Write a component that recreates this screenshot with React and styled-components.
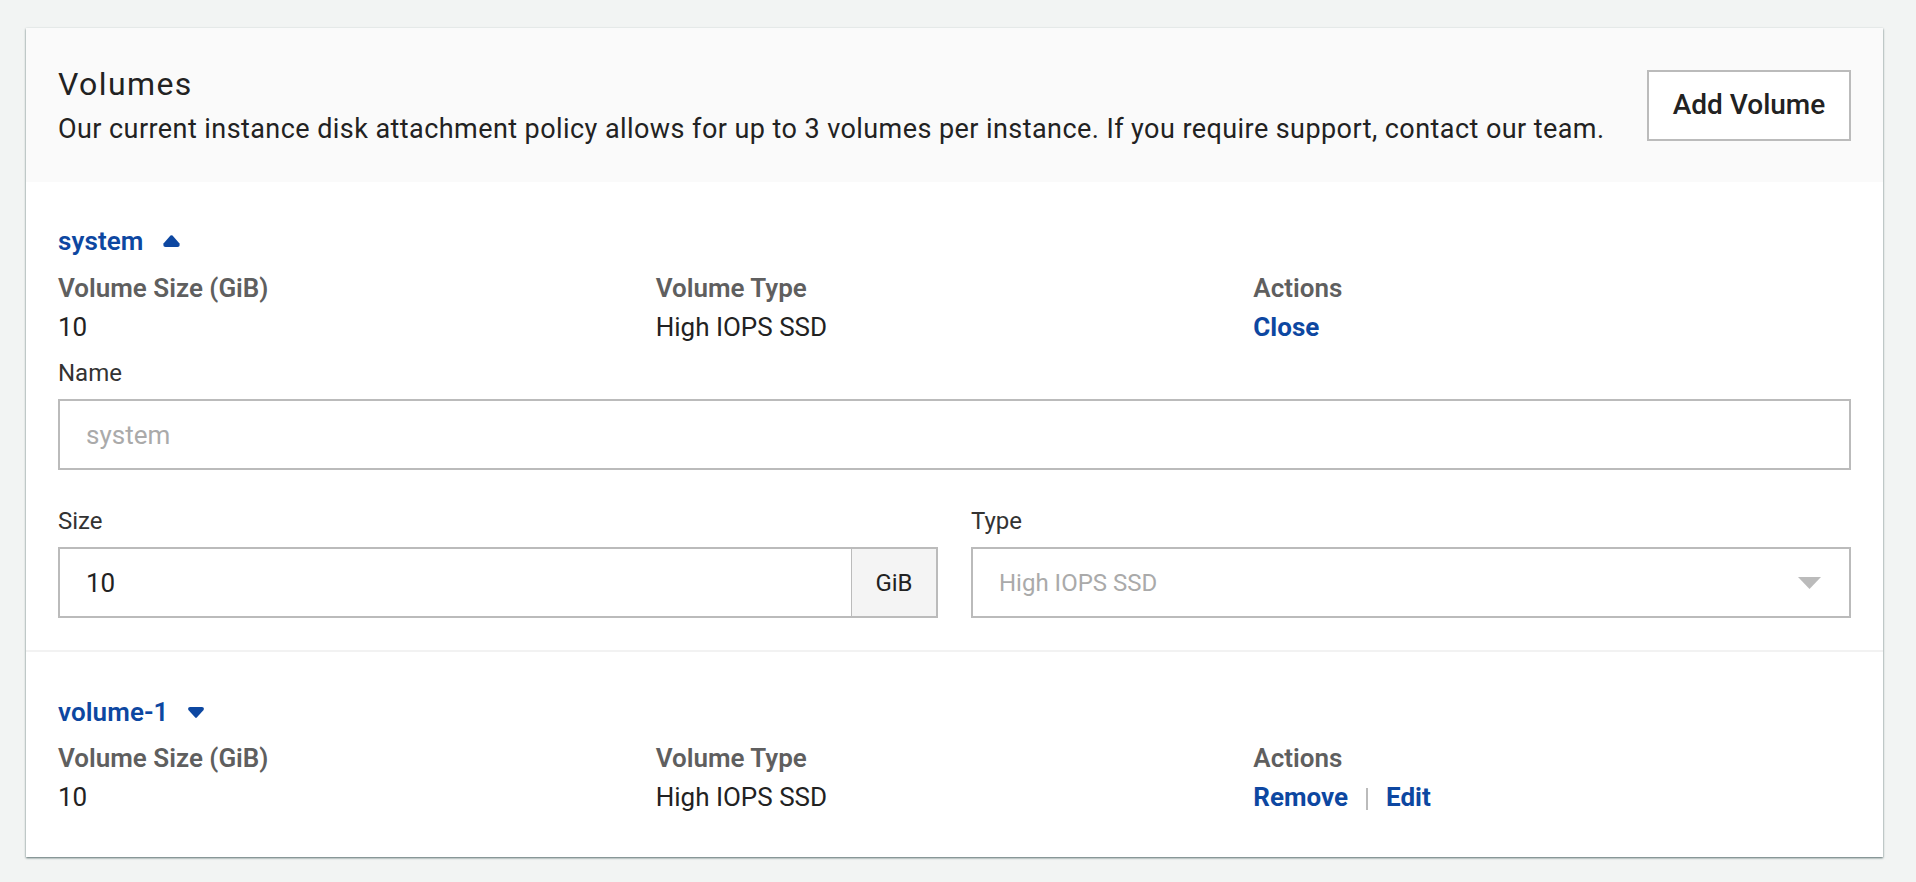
import React from "react";
import styled, { createGlobalStyle } from "styled-components";

const GlobalStyle = createGlobalStyle`
  html, body {
    margin: 0;
    padding: 0;
    background: #f2f4f3;
    font-family: Roboto, "Noto Sans", sans-serif;
    color: #222;
  }
`;

const Page = styled.div`
  box-sizing: border-box;
  height: 882px;
  padding: 28px 33px 0 26px;
  overflow: hidden;
`;

const Card = styled.section`
  background: #fff;
  height: 829px;
  box-shadow: 0 1px 2px rgba(60, 85, 85, 0.85);
`;

const CardHeader = styled.header`
  box-sizing: border-box;
  height: 154px;
  background: #fafafa;
  padding: 41px 32px 0;
  display: flex;
  justify-content: space-between;
  align-items: flex-start;
`;

const Title = styled.h2`
  margin: 0;
  font-size: 32px;
  line-height: 30px;
  font-weight: 450;
  letter-spacing: 1.4px;
  color: #222;
`;

const Description = styled.p`
  margin: 15px 0 0;
  font-size: 27px;
  line-height: 30px;
  letter-spacing: 0.43px;
  white-space: nowrap;
  color: #222;
`;

const AddButton = styled.button`
  box-sizing: border-box;
  width: 204px;
  height: 71px;
  margin-top: 1px;
  padding: 0 0 2px;
  background: #fff;
  border: 2px solid #bbb;
  font: 500 28px Roboto, sans-serif;
  color: #222;
`;

const Volume = styled.div`
  padding: ${(props) => props.$padding};
  border-bottom: ${(props) => (props.$divided ? "2px solid #f2f2f2" : "none")};
`;

const VolumeToggle = styled.div`
  display: flex;
  align-items: center;
  gap: 19px;
  height: 30px;
  font-size: 26px;
  font-weight: 600;
  letter-spacing: 0.1px;
  color: #0d47a1;
`;

const Caret = styled.svg`
  width: ${(props) => (props.$up ? "17px" : "16px")};
  height: ${(props) => (props.$up ? "12px" : "11px")};
  fill: #0d47a1;
`;

const Summary = styled.div`
  display: grid;
  grid-template-columns: repeat(3, 1fr);
  margin-top: ${(props) => props.$top};
`;

const SummaryHead = styled.div`
  font-size: 26px;
  font-weight: 600;
  line-height: 30px;
  color: #5f5f5f;
`;

const SummaryCell = styled.div`
  margin-top: 9px;
  font-size: 26px;
  line-height: 30px;
  color: #222;
`;

const ActionLink = styled.a`
  font-weight: 700;
  color: #0d47a1;
`;

const ActionSep = styled.span`
  display: inline-block;
  width: 2px;
  height: 22px;
  margin: 0 18px;
  background: #bbb;
  vertical-align: -4px;
`;

const Label = styled.label`
  display: block;
  font-size: 24px;
  line-height: 26px;
  color: #333;
  margin-bottom: 13px;
`;

const Input = styled.div`
  box-sizing: border-box;
  flex: 1;
  height: 71px;
  display: flex;
  align-items: center;
  padding: 0 26px;
  border: 2px solid #bbb;
  background: #fff;
  font-size: ${(props) => props.$size || "26px"};
  color: ${(props) => (props.$muted ? "#aaa" : "#222")};
`;

const NameField = styled.div`
  margin-top: 18px;
`;

const FieldRow = styled.div`
  display: grid;
  grid-template-columns: 880px 880px;
  column-gap: 33px;
  margin-top: 38px;
`;

const InputGroup = styled.div`
  display: flex;
`;

const GroupedInput = styled(Input)`
  border-right: 0;
`;

const Addon = styled.div`
  box-sizing: border-box;
  width: 87px;
  height: 71px;
  display: flex;
  align-items: center;
  justify-content: center;
  background: #f4f4f4;
  border: 2px solid #bbb;
  border-left-width: 1px;
  font-size: 24px;
  color: #222;
`;

const SelectBox = styled(Input)`
  justify-content: space-between;
  padding-right: 28px;
`;

const SelectCaret = styled.svg`
  width: 23px;
  height: 12px;
  fill: #bbb;
`;

function CaretIcon({ up }) {
  return (
    <Caret $up={up} viewBox={up ? "0 0 17 12" : "0 0 16 11"}>
      <path
        d={
          up
            ? "M7.5.5Q8.5-.2 9.5.5L16.3 8.2Q17.6 12 14.5 12H2.5Q-.6 12 .7 8.2Z"
            : "M.4 3Q-.6 0 2 0H14Q16.6 0 15.6 3L8.8 10.6Q8 11.2 7.2 10.6Z"
        }
      />
    </Caret>
  );
}

function VolumeSummary({ actions, top }) {
  return (
    <Summary $top={top}>
      <div>
        <SummaryHead>Volume Size (GiB)</SummaryHead>
        <SummaryCell>10</SummaryCell>
      </div>
      <div>
        <SummaryHead>Volume Type</SummaryHead>
        <SummaryCell>High IOPS SSD</SummaryCell>
      </div>
      <div>
        <SummaryHead>Actions</SummaryHead>
        <SummaryCell>{actions}</SummaryCell>
      </div>
    </Summary>
  );
}

export default function App() {
  return (
    <Page>
      <GlobalStyle />
      <Card>
        <CardHeader>
          <div>
            <Title>Volumes</Title>
            <Description>
              Our current instance disk attachment policy allows for up to 3 volumes per instance. If you require support, contact our team.
            </Description>
          </div>
          <AddButton>Add Volume</AddButton>
        </CardHeader>

        <Volume $padding="44px 32px 32px" $divided>
          <VolumeToggle>
            system
            <CaretIcon up />
          </VolumeToggle>
          <VolumeSummary top="17px" actions={<ActionLink>Close</ActionLink>} />
          <NameField>
            <Label>Name</Label>
            <Input $muted>system</Input>
          </NameField>
          <FieldRow>
            <div>
              <Label>Size</Label>
              <InputGroup>
                <GroupedInput>10</GroupedInput>
                <Addon>GiB</Addon>
              </InputGroup>
            </div>
            <div>
              <Label>Type</Label>
              <SelectBox $muted $size="24px">
                High IOPS SSD
                <SelectCaret viewBox="0 0 23 12">
                  <path d="M0 0H23L11.5 12Z" />
                </SelectCaret>
              </SelectBox>
            </div>
          </FieldRow>
        </Volume>

        <Volume $padding="45px 32px 0">
          <VolumeToggle>
            volume-1
            <CaretIcon />
          </VolumeToggle>
          <VolumeSummary
            top="16px"
            actions={
              <>
                <ActionLink>Remove</ActionLink>
                <ActionSep />
                <ActionLink>Edit</ActionLink>
              </>
            }
          />
        </Volume>
      </Card>
    </Page>
  );
}
